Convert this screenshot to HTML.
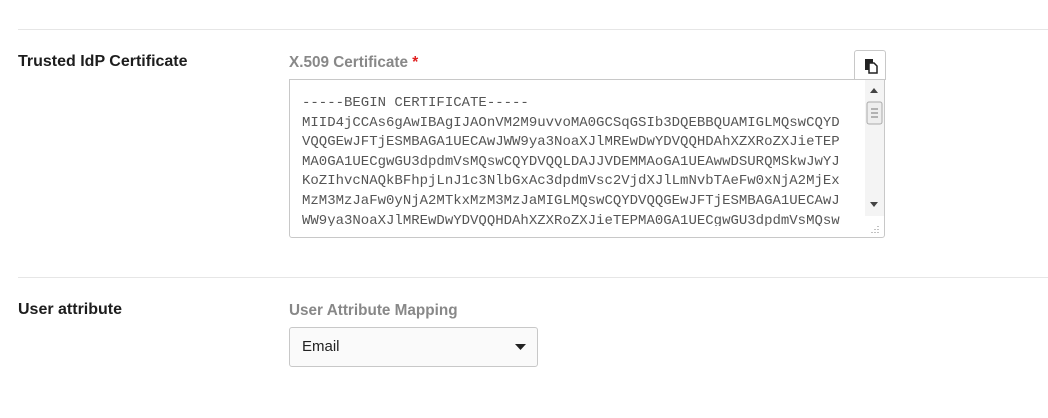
<!DOCTYPE html>
<html><head><style>
body{margin:0;width:1048px;height:418px;background:#fff;font-family:"Liberation Sans",sans-serif;position:relative;overflow:hidden}
.hr{position:absolute;left:18px;right:0;height:1px;background:#e6e6e6}
.lbl{position:absolute;left:18px;font-size:16px;font-weight:bold;color:#1d1d1d}
.sub{position:absolute;left:289px;font-size:15.3px;font-weight:bold;color:#888}
.ta{position:absolute;left:289px;top:79px;width:594px;height:157px;border:1px solid #c8c8c8;border-radius:0 0 3px 3px;overflow:hidden}
.clip{position:absolute;left:0;top:0;width:575px;height:146px;overflow:hidden}
.txt{position:absolute;left:12px;top:14px;font-family:"Liberation Mono",monospace;font-size:14px;line-height:19.6px;color:#555;white-space:pre}
.sb{position:absolute;left:575px;top:0;width:19px;height:136px;background:#f4f4f4}
.copy{position:absolute;left:854px;top:50px;width:30px;height:29px;border:1px solid #c8c8c8;border-bottom:none;border-radius:3px 3px 0 0;background:#fff}
.sel{position:absolute;left:289px;top:327px;width:247px;height:38px;border:1px solid #c8c8c8;border-radius:3px;background:#fafafa}
</style></head><body>
<div class="hr" style="top:29px"></div>
<div class="lbl" style="top:53px">Trusted IdP Certificate</div>
<div class="sub" style="top:54px">X.509 Certificate <span style="color:#e02020">*</span></div>
<div class="copy"><svg width="30" height="29" viewBox="0 0 30 29"><rect x="10" y="8" width="8" height="11" fill="#222"/><path d="M14 12h5l3 3v7h-8z" fill="#fff" stroke="#222" stroke-width="1.5"/></svg></div>
<div class="ta">
<div class="clip"><div class="txt">-----BEGIN CERTIFICATE-----
MIID4jCCAs6gAwIBAgIJAOnVM2M9uvvoMA0GCSqGSIb3DQEBBQUAMIGLMQswCQYD
VQQGEwJFTjESMBAGA1UECAwJWW9ya3NoaXJlMREwDwYDVQQHDAhXZXRoZXJieTEP
MA0GA1UECgwGU3dpdmVsMQswCQYDVQQLDAJJVDEMMAoGA1UEAwwDSURQMSkwJwYJ
KoZIhvcNAQkBFhpjLnJ1c3NlbGxAc3dpdmVsc2VjdXJlLmNvbTAeFw0xNjA2MjEx
MzM3MzJaFw0yNjA2MTkxMzM3MzJaMIGLMQswCQYDVQQGEwJFTjESMBAGA1UECAwJ
WW9ya3NoaXJlMREwDwYDVQQHDAhXZXRoZXJieTEPMA0GA1UECgwGU3dpdmVsMQsw</div></div>
<div class="sb">
<svg width="19" height="136"><path d="M5 13l4-5 4 5z" fill="#444"/><rect x="2" y="22" width="15" height="22" rx="2" fill="#eee" stroke="#aaa"/><path d="M6 29h7M6 33h7M6 37h7" stroke="#777"/><path d="M5 122l4 5 4-5z" fill="#444"/></svg>
</div>
<svg style="position:absolute;left:580px;top:144px" width="10" height="10"><path d="M8 2v1M5 5v1M8 5v1M2 8v1M5 8v1M8 8v1" stroke="#999" stroke-width="1.2"/></svg>
</div>
<div class="hr" style="top:277px"></div>
<div class="lbl" style="top:301px">User attribute</div>
<div class="sub" style="top:302px">User Attribute Mapping</div>
<div class="sel"><span style="position:absolute;left:12px;top:10px;font-size:15px;color:#222">Email</span><svg style="position:absolute;left:225px;top:16px" width="11" height="6"><path d="M0 0h11L5.5 6z" fill="#222"/></svg></div>
</body></html>
